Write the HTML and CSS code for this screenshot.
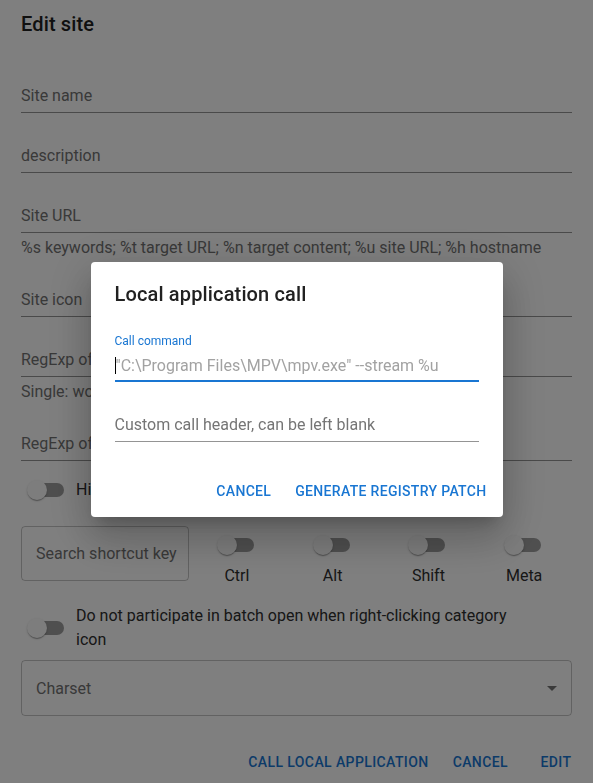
FILE: index.html
```html
<!DOCTYPE html>
<html lang="en">
<head>
    <meta charset="UTF-8">
    <meta name="viewport" content="width=device-width, initial-scale=1.0">
    <title>Edit site</title>
    <link rel="stylesheet" href="styles.css">
</head>
<body>

<div class="page">
    <h2 class="page-title">Edit site</h2>

    <div class="page-body">
        <div class="control">
            <div class="field"><label>Site name</label></div>
        </div>
        <div class="control">
            <div class="field"><label>description</label></div>
        </div>
        <div class="control">
            <div class="field"><label>Site URL</label></div>
            <p class="helper">%s keywords; %t target URL; %n target content; %u site URL; %h hostname</p>
        </div>
        <div class="control">
            <div class="field"><label>Site icon</label></div>
        </div>
        <div class="control">
            <div class="field"><label>RegExp of matching URL</label></div>
            <p class="helper">Single: word; multiple: separate with |</p>
        </div>
        <div class="control">
            <div class="field"><label>RegExp of page content</label></div>
        </div>

        <div class="toggle-row first">
            <span class="switch"><span class="track"></span><span class="thumb"></span></span>
            <span class="toggle-label">Hide</span>
        </div>

        <div class="shortcut-row">
            <div class="shortcut-box">Search shortcut key</div>
            <div class="key-col">
                <span class="switch"><span class="track"></span><span class="thumb"></span></span>
                <span class="key-label">Ctrl</span>
            </div>
            <div class="key-col">
                <span class="switch"><span class="track"></span><span class="thumb"></span></span>
                <span class="key-label">Alt</span>
            </div>
            <div class="key-col">
                <span class="switch"><span class="track"></span><span class="thumb"></span></span>
                <span class="key-label">Shift</span>
            </div>
            <div class="key-col">
                <span class="switch"><span class="track"></span><span class="thumb"></span></span>
                <span class="key-label">Meta</span>
            </div>
        </div>

        <div class="toggle-row batch">
            <span class="switch"><span class="track"></span><span class="thumb"></span></span>
            <span class="toggle-label wrap">Do not participate in batch open when right-clicking category icon</span>
        </div>

        <div class="select-box">
            <span class="select-label">Charset</span>
            <svg class="select-arrow" width="24" height="24" viewBox="0 0 24 24"><path d="M7 10l5 5 5-5z"/></svg>
        </div>
    </div>

    <div class="page-actions">
        <button class="text-btn">Call local application</button>
        <button class="text-btn">Cancel</button>
        <button class="text-btn">Edit</button>
    </div>
</div>

<div class="overlay">
    <div class="dialog">
        <h2 class="dialog-title">Local application call</h2>
        <div class="dialog-content">
            <div class="dlg-label">Call command</div>
            <div class="dlg-input focused"><span class="caret"></span><span class="placeholder">"C:\Program Files\MPV\mpv.exe" --stream %u</span></div>
            <div class="dlg-input plain"><span class="plain-label">Custom call header, can be left blank</span></div>
        </div>
        <div class="dialog-actions">
            <button class="text-btn">Cancel</button>
            <button class="text-btn">Generate registry patch</button>
        </div>
    </div>
</div>

</body>
</html>
```

FILE: styles.css
```css
* {
    box-sizing: border-box;
}
body {
    margin: 0;
    font-family: Roboto, "Liberation Sans", Arial, sans-serif;
    background-color: #fff;
    color: #212121;
}
.page {
    width: 593px;
}
.page-title {
    margin: 0;
    padding: 8px 21px 17px;
    font-size: 20px;
    line-height: 32px;
    font-weight: 500;
    letter-spacing: 0.15px;
    color: #212121;
}
.page-body {
    display: flex;
    flex-direction: column;
    padding: 0 21px;
}
.control {
    margin: 8px 0 4px;
}
.field {
    height: 48px;
    display: flex;
    align-items: flex-end;
    padding-bottom: 6px;
    border-bottom: 1px solid #949494;
}
.field label {
    font-size: 16px;
    line-height: 20px;
    color: #727272;
}
.helper {
    margin: 6px 0 0;
    font-size: 16px;
    line-height: 18px;
    color: #727272;
}

/* switch */
.switch {
    position: relative;
    display: inline-block;
    width: 58px;
    height: 38px;
    flex-shrink: 0;
}
.switch .track {
    position: absolute;
    left: 12px;
    top: 12px;
    width: 34px;
    height: 14px;
    border-radius: 7px;
    background-color: #000;
    opacity: 0.38;
}
.switch .thumb {
    position: absolute;
    left: 9px;
    top: 9px;
    width: 20px;
    height: 20px;
    border-radius: 50%;
    background-color: #fafafa;
    box-shadow: 0 2px 1px -1px rgba(0, 0, 0, 0.2), 0 1px 1px 0 rgba(0, 0, 0, 0.14), 0 1px 3px 0 rgba(0, 0, 0, 0.12);
}

.toggle-row {
    display: flex;
    align-items: center;
    margin-left: -3px;
}
.toggle-row.first {
    margin-top: 6px;
    height: 38px;
}
.toggle-row.batch {
    margin-top: 16px;
}
.toggle-label {
    font-size: 16px;
    line-height: 24px;
    color: #2e2e2e;
}
.toggle-label.wrap {
    max-width: 460px;
}

.shortcut-row {
    display: flex;
    align-items: flex-start;
    margin-top: 17px;
}
.shortcut-box {
    width: 168px;
    height: 55px;
    flex-shrink: 0;
    display: flex;
    align-items: center;
    padding: 0 14px;
    border: 1px solid rgba(0, 0, 0, 0.23);
    border-radius: 4px;
    font-size: 16px;
    color: #727272;
    white-space: nowrap;
}
.key-col {
    flex: 1;
    display: flex;
    flex-direction: column;
    align-items: center;
}
.key-label {
    font-size: 16px;
    line-height: 24px;
    color: #2e2e2e;
}

.select-box {
    margin-top: 8px;
    height: 56px;
    display: flex;
    align-items: center;
    justify-content: space-between;
    padding: 0 7px 0 14px;
    border: 1px solid rgba(0, 0, 0, 0.23);
    border-radius: 4px;
}
.select-label {
    font-size: 16px;
    color: #727272;
}
.select-arrow {
    fill: rgba(0, 0, 0, 0.54);
}

.page-actions {
    display: flex;
    justify-content: flex-end;
    gap: 8px;
    margin-top: 20px;
    padding: 8px 5px 8px 8px;
}
.text-btn {
    min-width: 64px;
    padding: 6px 8px;
    border: none;
    background: none;
    font-family: Roboto, "Liberation Sans", Arial, sans-serif;
    font-size: 14px;
    font-weight: 500;
    line-height: 24.5px;
    letter-spacing: 0.4px;
    text-transform: uppercase;
    color: #1976d2;
    border-radius: 4px;
}

/* modal */
.overlay {
    position: fixed;
    top: 0;
    left: 0;
    right: 0;
    bottom: 0;
    background-color: rgba(0, 0, 0, 0.5);
    display: flex;
    align-items: center;
    justify-content: center;
    padding-bottom: 4px;
}
.dialog {
    width: 412px;
    background-color: #fff;
    border-radius: 4px;
    box-shadow: 0 11px 15px -7px rgba(0, 0, 0, 0.2), 0 24px 38px 3px rgba(0, 0, 0, 0.14), 0 9px 46px 8px rgba(0, 0, 0, 0.12);
}
.dialog-title {
    margin: 0;
    padding: 16px 24px;
    font-size: 20px;
    line-height: 32px;
    font-weight: 500;
    letter-spacing: 0.15px;
    color: #212121;
}
.dialog-content {
    padding: 8px 24px 0;
}
.dlg-label {
    font-size: 12px;
    line-height: 14px;
    margin-bottom: 2px;
    color: #1976d2;
}
.dlg-input {
    font-size: 16px;
    line-height: 23px;
    white-space: nowrap;
}
.dlg-input.focused {
    padding: 4px 0 3px;
    border-bottom: 2px solid #1976d2;
}
.dlg-input.plain {
    margin-top: 27px;
    padding: 4px 0 5px;
    border-bottom: 1px solid #949494;
}
.caret {
    display: inline-block;
    width: 1px;
    height: 17px;
    vertical-align: -3px;
    background-color: #000;
}
.placeholder {
    color: #a2a2a2;
}
.plain-label {
    color: #757575;
}
.dialog-actions {
    display: flex;
    justify-content: flex-end;
    gap: 8px;
    padding: 31px 8px 8px 8px;
}
.dialog-actions .text-btn {
    letter-spacing: 0.32px;
}
```
